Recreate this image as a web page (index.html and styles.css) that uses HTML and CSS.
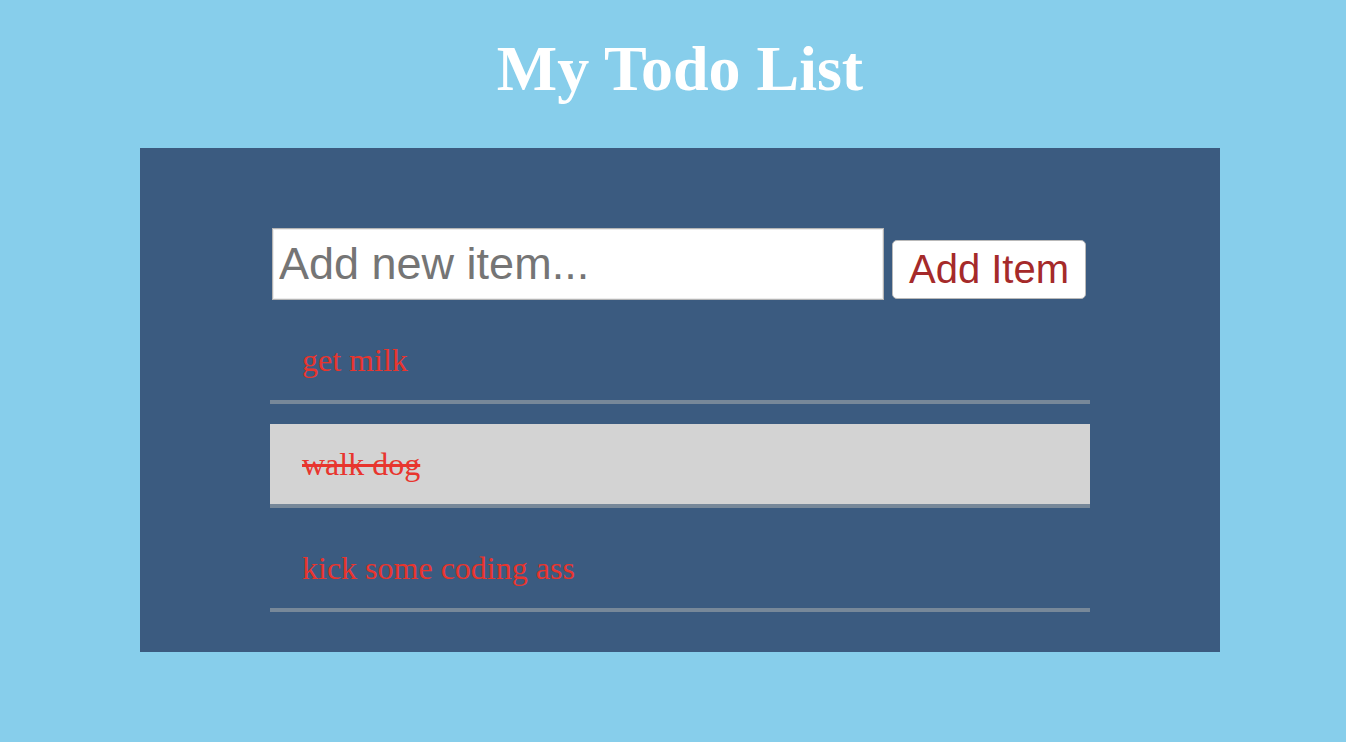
FILE: index.html
```html
<!DOCTYPE html>
<html>
<head>
<meta charset="utf-8">
<title>My Todo List</title>
<link rel="stylesheet" href="styles.css">
</head>
<body>
<div class="page">
  <h1 class="title">My Todo List</h1>
  <div class="panel">
    <form class="add-form">
      <input class="add-input" type="text" placeholder="Add new item...">
      <button class="add-btn" type="button">Add Item</button>
    </form>
    <ul class="todo-list">
      <li class="todo-item">get milk</li>
      <li class="todo-item done">walk dog</li>
      <li class="todo-item">kick some coding ass</li>
    </ul>
  </div>
</div>
</body>
</html>
```

FILE: styles.css
```css
html, body {
  margin: 0;
  padding: 0;
}
body {
  background: #87ceeb;
  font-family: "Liberation Serif", "Times New Roman", serif;
  height: 742px;
  overflow: hidden;
}
.page {
  width: 1080px;
  margin-left: 140px;
}
.title {
  margin: 32px 0 42px;
  font-size: 64px;
  line-height: 74px;
  font-weight: bold;
  color: #ffffff;
  text-align: center;
}
.panel {
  background: #3b5b80;
  padding: 80px 130px 40px;
}
.add-form {
  display: flex;
  align-items: flex-end;
  margin: 0 0 20px 2px;
}
.add-input {
  box-sizing: border-box;
  width: 612px;
  height: 72px;
  margin: 0;
  padding: 0 6px;
  border: 1px solid #b5b5b5;
  box-shadow: inset 0 0 0 1px #ececec;
  background: #fff;
  font-family: "Liberation Sans", Arial, sans-serif;
  font-size: 45px;
  color: #333;
  outline: none;
}
.add-input::placeholder {
  color: #757575;
}
.add-btn {
  box-sizing: border-box;
  width: 194px;
  height: 59px;
  margin: 0 0 1px 8px;
  padding: 0;
  border: 1px solid #b9b9b9;
  border-radius: 5px;
  background: #fff;
  color: #a52a2a;
  font-family: "Liberation Sans", Arial, sans-serif;
  font-size: 40px;
  line-height: 57px;
}
.todo-list {
  list-style: none;
  margin: 0;
  padding: 0;
  display: flex;
  flex-direction: column;
  gap: 20px;
}
.todo-item {
  height: 80px;
  line-height: 80px;
  padding-left: 32px;
  border-bottom: 4px solid #778899;
  color: #e8352e;
  font-size: 32px;
}
.todo-item.done {
  background: #d3d3d3;
  text-decoration: line-through;
}
```
